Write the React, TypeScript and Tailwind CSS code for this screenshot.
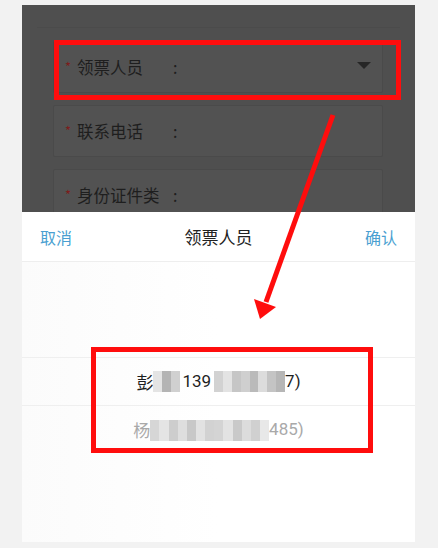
const cjk = { fontFamily: '"Noto Sans CJK SC", "Noto Sans", sans-serif' };

const shades1 = ['#e4e4e4', '#b4b4b4', '#d0d0d0'];
const shades2 = ['#d2d2d2', '#e3e3e3', '#c6c6c6', '#cfcfcf', '#bababa', '#dcdcdc', '#c4c4c4', '#b6b6b6'];
const shades3 = ['#d6d6d6', '#e4e4e4', '#cdcdcd', '#dedede', '#c8c8c8', '#e2e2e2', '#d2d2d2', '#d4d4d4', '#e3e3e3', '#c9c9c9', '#dcdcdc', '#d0d0d0', '#e8e8e8'];

function Mosaic({ shades, width }: { shades: string[]; width: number }) {
    const cell = width / shades.length;
    return (
        <span className="inline-flex h-[21px] blur-[0.6px]">
            {shades.map((c, i) => (
                <span key={i} className="h-full" style={{ width: cell, background: c }} />
            ))}
        </span>
    );
}

function Field({ label, dropdown, className }: { label: string; dropdown?: boolean; className: string }) {
    return (
        <div className={`flex items-center w-[330px] h-[52px] pl-[11px] pr-[11px] bg-[#525252] border border-[#4a4a4a] rounded-[2px] ${className}`}>
            <span className="w-[12px] text-[13px] text-[#7d1c1c]">*</span>
            <span className="w-[96px] text-[16.5px] text-[#1e1e1e]">{label}</span>
            <span className="text-[16px] text-[#1e1e1e]">:</span>
            <div className="flex-1" />
            {dropdown && (
                <span className="w-0 h-0 border-l-[7px] border-r-[7px] border-t-[7px] border-l-transparent border-r-transparent border-t-[#262626] mb-[3px]" />
            )}
        </div>
    );
}

export default function App() {
    return (
        <div className="relative w-[438px] h-[548px] bg-[#f2f2f2] pt-[5px] pl-[22px] overflow-hidden" style={cjk}>
            <div className="w-[393px] h-[537px] flex flex-col">
                {/* dimmed form behind the picker */}
                <div className="h-[207px] bg-[#4f4f4f] overflow-hidden pt-[22px] px-[15px]">
                    <div className="border-t border-[#4b4b4b] pt-[13px] pl-[16px]">
                        <Field label="领票人员" dropdown className="" />
                        <Field label="联系电话" className="mt-[12px]" />
                        <Field label="身份证件类" className="mt-[12px]" />
                    </div>
                </div>

                {/* picker sheet */}
                <div className="flex-1 bg-white flex flex-col">
                    <div className="h-[50px] flex items-center justify-between px-[18px] border-b border-[#eeeeee]">
                        <span className="text-[16px] text-[#4a9fd1]">取消</span>
                        <span className="text-[17px] text-[#222]">领票人员</span>
                        <span className="text-[16px] text-[#4a9fd1]">确认</span>
                    </div>
                    <div className="flex-1 pt-[95px] bg-gradient-to-r from-[#fbfbfb] via-white to-white">
                        <div className="h-[49px] flex items-center justify-center border-y border-[#efefef] text-[17px] text-[#1f1f1f]">
                            <span>彭</span>
                            <Mosaic shades={shades1} width={27} />
                            <span className="ml-[2px]" style={{ fontFamily: 'Roboto, sans-serif' }}>139</span>
                            <span className="ml-[3px] flex"><Mosaic shades={shades2} width={71} /></span>
                            <span style={{ fontFamily: 'Roboto, sans-serif' }}>7)</span>
                        </div>
                        <div className="h-[48px] flex items-center justify-center text-[17px] text-[#a9a9a9]">
                            <span>杨</span>
                            <Mosaic shades={shades3} width={119} />
                            <span style={{ fontFamily: 'Roboto, sans-serif' }}>485)</span>
                        </div>
                    </div>
                </div>
            </div>

            {/* annotations */}
            <div className="absolute left-[54px] top-[40px] w-[347px] h-[60px] border-[5px] border-[#ff0d0d]" />
            <div className="absolute left-[91px] top-[347px] w-[282px] h-[106px] border-[5px] border-[#ff0d0d]" />
            <svg className="absolute left-0 top-0" width="438" height="548" viewBox="0 0 438 548">
                <line x1="333" y1="115" x2="266" y2="302" stroke="#ff0d0d" strokeWidth="5" />
                <polygon points="260,319 254,299 276,307" fill="#ff0d0d" />
            </svg>
        </div>
    );
}
